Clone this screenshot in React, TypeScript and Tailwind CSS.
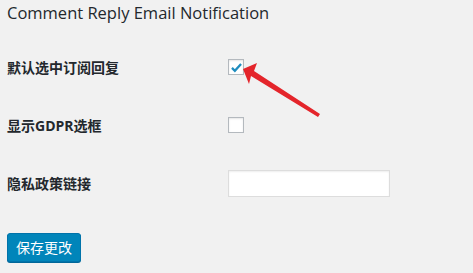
import React from "react";

const font = { fontFamily: '"Open Sans", "Noto Sans CJK SC", sans-serif' };

function Row({ label, children }: { label: string; children: React.ReactNode }) {
    return (
        <div className="flex items-center h-[58px]">
            <div className="w-[221px] text-[14px] font-bold text-[#23282d]">{label}</div>
            {children}
        </div>
    );
}

export default function App() {
    return (
        <div className="relative w-[473px] h-[273px] bg-[#f1f1f1] pl-[7px] overflow-hidden" style={font}>
            <h2 className="h-[38px] pt-[1px] text-[16.5px] leading-[24px] text-[#23282d]">
                Comment Reply Email Notification
            </h2>

            <Row label="默认选中订阅回复">
                <div className="w-4 h-4 border border-[#b4b9be] bg-white shadow-[inset_0_1px_2px_rgba(0,0,0,0.1)] flex items-center justify-center">
                    <svg width="13" height="13" viewBox="0 0 20 20">
                        <path d="M3 10.5 L7.5 15 L17 4.5" fill="none" stroke="#1e8cbe" strokeWidth="3.5" />
                    </svg>
                </div>
            </Row>

            <Row label="显示GDPR选框">
                <div className="w-4 h-4 border border-[#b4b9be] bg-white shadow-[inset_0_1px_2px_rgba(0,0,0,0.1)]" />
            </Row>

            <Row label="隐私政策链接">
                <div className="w-[162px] h-[27px] border border-[#ddd] bg-white shadow-[inset_0_1px_2px_rgba(0,0,0,0.07)]" />
            </Row>

            <button className="mt-[21px] h-[29px] px-[8px] rounded-[3px] bg-[#0085ba] border border-[#0073aa] text-white text-[14px] shadow-[0_1px_0_#006799]">
                保存更改
            </button>

            {/* red arrow */}
            <svg className="absolute left-0 top-0" width="473" height="273">
                <polygon
                    points="243,69 257,63 254,71 320,114 318,117 251,76 249,84"
                    fill="#e4252b"
                />
            </svg>
        </div>
    );
}
